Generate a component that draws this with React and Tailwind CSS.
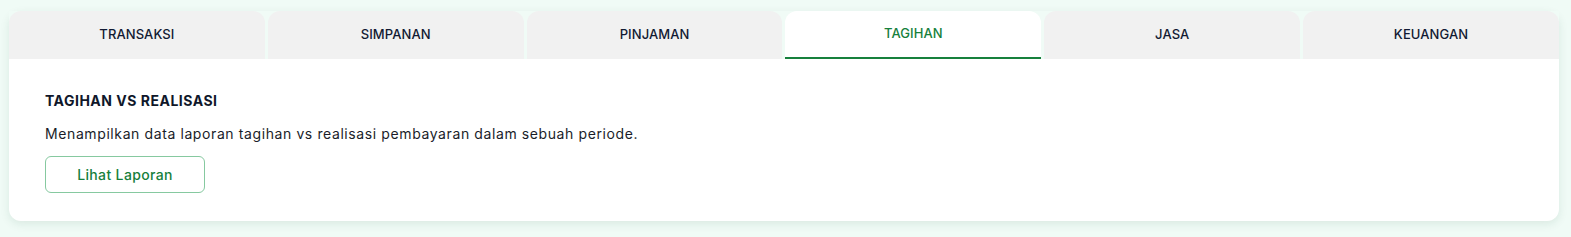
import React from "react";

const tabs = ["TRANSAKSI", "SIMPANAN", "PINJAMAN", "TAGIHAN", "JASA", "KEUANGAN"];

export default function App() {
  return (
    <div className="w-[1571px] h-[237px] bg-[#f0fbf6] pt-[11px] pl-[9px] pr-[12px]" style={{ fontFamily: "Inter, 'Noto Sans', sans-serif" }}>
      <div className="rounded-xl bg-white shadow-[0_3px_10px_rgba(16,80,50,0.10)]">
        <div className="grid grid-cols-6 gap-[3px] bg-[#f0fbf6]">
          {tabs.map((t) => {
            const active = t === "TAGIHAN";
            return (
              <div
                key={t}
                className={
                  active
                    ? "h-[48px] rounded-t-xl bg-white flex items-center justify-center text-[13px] font-medium tracking-[0.1px] text-[#16803c] border-b-2 border-[#16803c]"
                    : "h-[48px] rounded-t-xl bg-[#f1f1f1] flex items-center justify-center text-[13px] font-medium tracking-[0.1px] text-[#111a33]"
                }
              >
                {t}
              </div>
            );
          })}
        </div>
        <div className="px-[36px] pt-[32px] pb-[28px]">
          <h2 className="text-[14px] font-bold tracking-[0.5px] text-[#0f172a] leading-[20px]">TAGIHAN VS REALISASI</h2>
          <p className="mt-[13px] text-[14px] tracking-[0.6px] text-[#1a1d29] leading-[20px]">
            Menampilkan data laporan tagihan vs realisasi pembayaran dalam sebuah periode.
          </p>
          <button className="mt-[12px] w-[160px] h-[37px] rounded-md border border-[#86c9a0] text-[14px] font-medium tracking-[0.35px] text-[#16803c] bg-white">
            Lihat Laporan
          </button>
        </div>
      </div>
    </div>
  );
}
